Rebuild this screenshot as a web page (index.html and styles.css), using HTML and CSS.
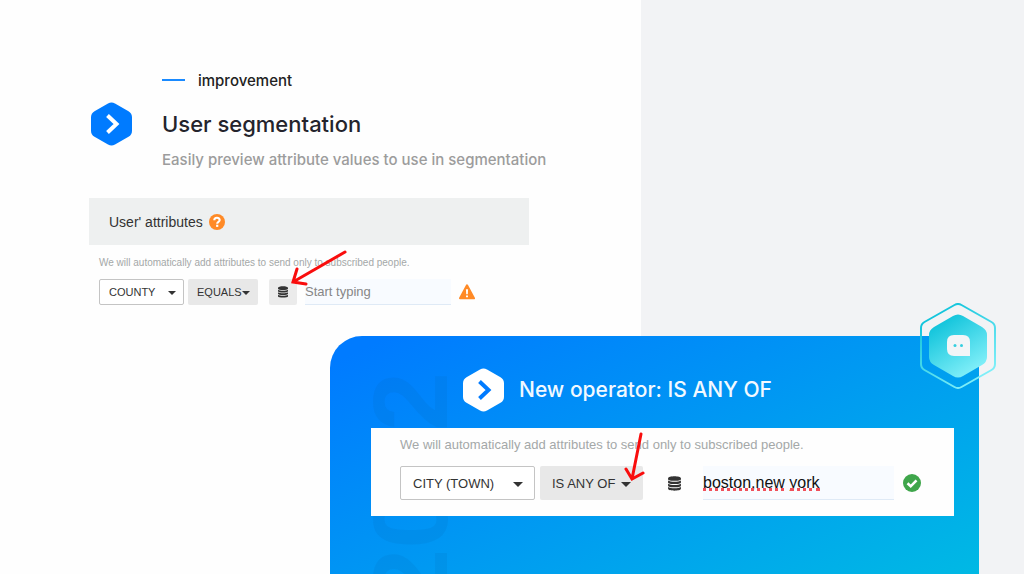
FILE: index.html
```
<!DOCTYPE html>
<html lang="en">
<head>
    <meta charset="UTF-8">
    <meta name="viewport" content="width=device-width, initial-scale=1.0">
    <title>User segmentation</title>
    <link rel="stylesheet" href="styles.css">
</head>
<body>
    <div class="page">
        <header class="intro">
            <p class="eyebrow">improvement</p>
            <svg class="logo" viewBox="0 0 41 44" aria-hidden="true">
                <path d="M17 1.600Q20.500 -.4 24 1.600L37.500 9.300Q41 11.300 41 15.300V28.700Q41 32.700 37.500 34.700L24 42.400Q20.500 44.400 17 42.400L3.500 34.700Q0 32.700 0 28.700V15.300Q0 11.300 3.500 9.300Z" fill="#007bff"/>
                <path d="M16.500 13.500L25.500 22L16.500 30.500" fill="none" stroke="#fff" stroke-width="4"/>
            </svg>
            <h1>User segmentation</h1>
            <p class="subtitle">Easily preview attribute values to use in segmentation</p>
        </header>

        <section class="builder">
            <div class="builder-head">
                <h2>User' attributes</h2>
                <svg class="icon-help" viewBox="0 0 16 16" role="img" aria-label="Help">
                    <circle cx="8" cy="8" r="8" fill="#ff8a26"/>
                    <path d="M5.300 6.200C5.300 2.900 10.700 2.900 10.700 6.100C10.700 7.900 8.200 7.800 8.200 9.700" fill="none" stroke="#fff" stroke-width="2.100"/>
                    <rect x="7.100" y="10.700" width="2.200" height="2.200" fill="#fff"/>
                </svg>
            </div>
            <div class="builder-body">
                <p class="hint">We will automatically add attributes to send only to subscribed people.</p>
                <div class="row">
                    <span class="select outlined">
                        <select aria-label="Attribute"><option>COUNTY</option></select>
                    </span>
                    <span class="select filled">
                        <select aria-label="Operator"><option>EQUALS</option></select>
                    </span>
                    <button class="values" type="button" aria-label="Show values">
                        <svg class="icon-db" viewBox="0 0 12 14" aria-hidden="true">
                            <path d="M0 2C0-.5 12-.5 12 2V3C12 5 0 5 0 3ZM0 4.300C2 5.800 10 5.800 12 4.300V6C12 8 0 8 0 6ZM0 7.300C2 8.800 10 8.800 12 7.300V9C12 11 0 11 0 9ZM0 10.300C2 11.800 10 11.800 12 10.300V12C12 14.300 0 14.300 0 12Z" fill="#333"/>
                        </svg>
                    </button>
                    <span class="field">
                        <input type="text" aria-label="Value" placeholder="Start typing">
                    </span>
                    <svg class="icon-state" viewBox="0 0 16 16" role="img" aria-label="Value required">
                        <path d="M8 1.300L15 14.300H1Z" fill="#ff8a26" stroke="#ff8a26" stroke-width="2" stroke-linejoin="round"/>
                        <path d="M6.900 5.300H9.100L8.800 10.300H7.200ZM7 11.400H9V13.300H7Z" fill="#fff"/>
                    </svg>
                </div>
            </div>
            <svg class="arrow arrow-values" viewBox="0 0 58 38" aria-hidden="true">
                <path d="M55 3L3 33M7 20L3 33L16 35" />
            </svg>
        </section>

        <section class="panel">
            <span class="year" aria-hidden="true">2022</span>
            <div class="panel-title">
                <svg class="logo" viewBox="0 0 41 44" aria-hidden="true">
                    <path d="M17 1.600Q20.500 -.4 24 1.600L37.500 9.300Q41 11.300 41 15.300V28.700Q41 32.700 37.500 34.700L24 42.400Q20.500 44.400 17 42.400L3.500 34.700Q0 32.700 0 28.700V15.300Q0 11.300 3.500 9.300Z" fill="#fff"/>
                    <path d="M16.500 13.500L25.500 22L16.500 30.500" fill="none" stroke="#007bff" stroke-width="4"/>
                </svg>
                <h2>New operator: IS ANY OF</h2>
            </div>
            <div class="card">
                <p class="hint">We will automatically add attributes to send only to subscribed people.</p>
                <div class="row">
                    <span class="select outlined">
                        <select aria-label="Attribute"><option>CITY (TOWN)</option></select>
                    </span>
                    <span class="select filled">
                        <select aria-label="Operator"><option>IS ANY OF</option></select>
                    </span>
                    <button class="values plain" type="button" aria-label="Show values">
                        <svg class="icon-db" viewBox="0 0 12 14" aria-hidden="true">
                            <path d="M0 2C0-.5 12-.5 12 2V3C12 5 0 5 0 3ZM0 4.300C2 5.800 10 5.800 12 4.300V6C12 8 0 8 0 6ZM0 7.300C2 8.800 10 8.800 12 7.300V9C12 11 0 11 0 9ZM0 10.300C2 11.800 10 11.800 12 10.300V12C12 14.300 0 14.300 0 12Z" fill="#333"/>
                        </svg>
                    </button>
                    <span class="field">
                        <input type="text" aria-label="Value" value="boston,new york" spellcheck="false">
                        <span class="typo typo-first"></span>
                        <span class="typo typo-last"></span>
                    </span>
                    <svg class="icon-state" viewBox="0 0 18 18" role="img" aria-label="Valid">
                        <circle cx="9" cy="9" r="9" fill="#3fa64b"/>
                        <path d="M4.500 9.300L7.700 12.300L13.500 6.300" fill="none" stroke="#fff" stroke-width="2.600"/>
                    </svg>
                </div>
                <svg class="arrow arrow-operator" viewBox="0 0 22 52" aria-hidden="true">
                    <path d="M17 2L8 47M2 37L8 47L19 41" />
                </svg>
            </div>
            <svg class="badge" viewBox="0 0 76 86" aria-hidden="true">
                <defs>
                    <linearGradient id="badgeFill" x1="0.200" y1="0" x2="0.800" y2="1">
                        <stop offset="0.100" stop-color="#14c5dc"/>
                        <stop offset="0.900" stop-color="#7eeef8"/>
                    </linearGradient>
                </defs>
                <path d="M34.500 2Q38 0 41.500 2L71.500 19Q75 21 75 25V61Q75 65 71.500 67L41.500 84Q38 86 34.500 84L4.500 67Q1 65 1 61V25Q1 21 4.500 19Z" fill="none" stroke="url(#badgeFill)" stroke-width="2"/>
                <path d="M33 13Q38 10 43 13L62 24Q67 27 67 32V54Q67 59 62 62L43 73Q38 76 33 73L14 62Q9 59 9 54V32Q9 27 14 24Z" fill="url(#badgeFill)"/>
                <path d="M34 32H43Q50 32 50 39V53H34Q27 53 27 46V39Q27 32 34 32Z" fill="#f3f5f7"/>
                <circle cx="35" cy="42.500" r="1.500" fill="#35cfe0"/>
                <circle cx="41.500" cy="42.500" r="1.500" fill="#35cfe0"/>
            </svg>
        </section>
    </div>
</body>
</html>
```
FILE: styles.css
```
* {
    box-sizing: border-box;
}
body {
    margin: 0;
    font-family: "Liberation Sans", Arial, sans-serif;
    color: #333;
}
h1, h2, p {
    margin: 0;
}
.page {
    display: flex;
    flex-direction: column;
    min-height: 100vh;
    overflow: hidden;
    position: relative;
    background: linear-gradient(to right, #fefefe 62.6%, #f2f3f5 62.6%);
}

/* intro */
.intro {
    display: grid;
    grid-template-columns: 41px 1fr;
    grid-template-rows: 34px 44px auto;
    column-gap: 30px;
    padding: 68px 0 0 91px;
    font-family: Inter, "Noto Sans", sans-serif;
}
.eyebrow {
    grid-column: 2;
    display: flex;
    align-items: center;
    gap: 13px;
    height: 24px;
    font-size: 15px;
    font-weight: 500;
    color: #222;
}
.eyebrow::before {
    content: "";
    width: 23px;
    height: 2px;
    background: #1a8aff;
}
.logo {
    width: 41px;
    height: 44px;
    flex: none;
}
.intro h1 {
    align-self: center;
    font-size: 22px;
    line-height: 32px;
    font-weight: 500;
    color: #24242c;
}
.subtitle {
    grid-column: 2;
    padding-top: 2px;
    font-size: 15px;
    line-height: 24px;
    font-weight: 500;
    color: #9c9c9c;
}

/* attribute builder */
.builder {
    position: relative;
    width: 43%;
    margin: 26px 0 31px 89px;
}
.builder-head {
    display: flex;
    align-items: center;
    gap: 6px;
    height: 47px;
    padding-left: 20px;
    background: #eef0f0;
}
.builder-head h2 {
    font-size: 14px;
    font-weight: 400;
}
.icon-help {
    width: 16px;
    height: 16px;
}
.builder-body {
    padding: 10px 54px 0 10px;
}
.hint {
    font-size: 10px;
    line-height: 16px;
    color: #a4a8a8;
}
.row {
    display: flex;
    align-items: center;
    gap: 4px;
    height: 26px;
    margin-top: 8px;
}
.select {
    position: relative;
    height: 100%;
}
.select select {
    appearance: none;
    width: 100%;
    height: 100%;
    padding: 0 9px;
    border: 0;
    border-radius: 2px;
    background: #e8e8e8;
    color: #333;
    font-family: inherit;
    font-size: 11px;
}
.select::after {
    content: "";
    position: absolute;
    top: 50%;
    right: 8px;
    margin-top: -1px;
    border: 4px solid transparent;
    border-top-color: #333;
    border-bottom: 0;
    pointer-events: none;
}
.outlined {
    width: 85px;
}
.outlined select {
    background: #fff;
    border: 1px solid #c4c4c4;
}
.filled {
    width: 70px;
}
.values {
    display: flex;
    align-items: center;
    justify-content: center;
    width: 28px;
    height: 100%;
    margin-left: 7px;
    padding: 0;
    border: 0;
    border-radius: 2px;
    background: #ebebeb;
}
.values.plain {
    background: none;
}
.icon-db {
    width: 10px;
    height: 12px;
}
.field {
    position: relative;
    flex: 1;
    height: 100%;
    margin-left: 4px;
}
.field input {
    width: 100%;
    height: 100%;
    padding: 0;
    border: 0;
    border-bottom: 1px solid #dfeaf6;
    background: #f8fbff;
    color: #111;
    font-family: inherit;
    font-size: 13px;
}
.field input::placeholder {
    color: #868686;
}
.icon-state {
    width: 16px;
    height: 16px;
    margin-left: 4px;
}

/* blue panel */
.panel {
    position: relative;
    flex: 1;
    margin: 0 45px 0 330px;
    padding: 32px 25px 58px 41px;
    border-radius: 32px 0 0 0;
    background: linear-gradient(155deg, #007bff 5%, #00b9e4 100%);
}
.year {
    position: absolute;
    top: 36px;
    left: 27px;
    writing-mode: vertical-rl;
    transform: rotate(180deg);
    font-size: 106px;
    line-height: 106px;
    font-weight: 700;
    color: rgba(0, 95, 175, 0.12);
}
.panel-title {
    position: relative;
    display: flex;
    align-items: center;
    gap: 15px;
    padding-left: 92px;
}
.panel-title h2 {
    font-family: Inter, "Noto Sans", sans-serif;
    font-size: 21px;
    line-height: 32px;
    font-weight: 500;
    color: #f2f9ff;
}
.card {
    position: relative;
    margin-top: 16px;
    padding: 7px 33px 16px 29px;
    background: #fefefe;
}
.card .hint {
    font-size: 13px;
    line-height: 20px;
}
.card .row {
    height: 34px;
    margin-top: 11px;
    gap: 5px;
}
.card .select select {
    padding: 0 12px;
    font-size: 13px;
}
.card .select::after {
    right: 12px;
    border-width: 5px;
    border-bottom: 0;
}
.card .outlined {
    width: 135px;
}
.card .filled {
    width: 103px;
}
.card .values {
    margin-left: 12px;
}
.card .icon-db {
    width: 13px;
    height: 15px;
}
.card .field {
    margin-left: 10px;
}
.card .field input {
    font-size: 16px;
}
.card .icon-state {
    width: 18px;
    height: 18px;
}

/* spell check marks */
.typo {
    position: absolute;
    top: 22px;
    border-bottom: 3px dotted #f0505a;
}
.typo-first {
    left: 0;
    width: 81px;
}
.typo-last {
    left: 87px;
    width: 30px;
}

/* annotations */
.arrow {
    position: absolute;
    fill: none;
    stroke: #f90d0d;
    stroke-width: 3;
    stroke-linecap: round;
}
.arrow-values {
    top: 51px;
    left: 201px;
    width: 58px;
    height: 38px;
}
.arrow-operator {
    top: 4px;
    left: 253px;
    width: 22px;
    height: 52px;
}
.badge {
    position: absolute;
    top: -33px;
    right: -17px;
    width: 76px;
    height: 86px;
}
```
